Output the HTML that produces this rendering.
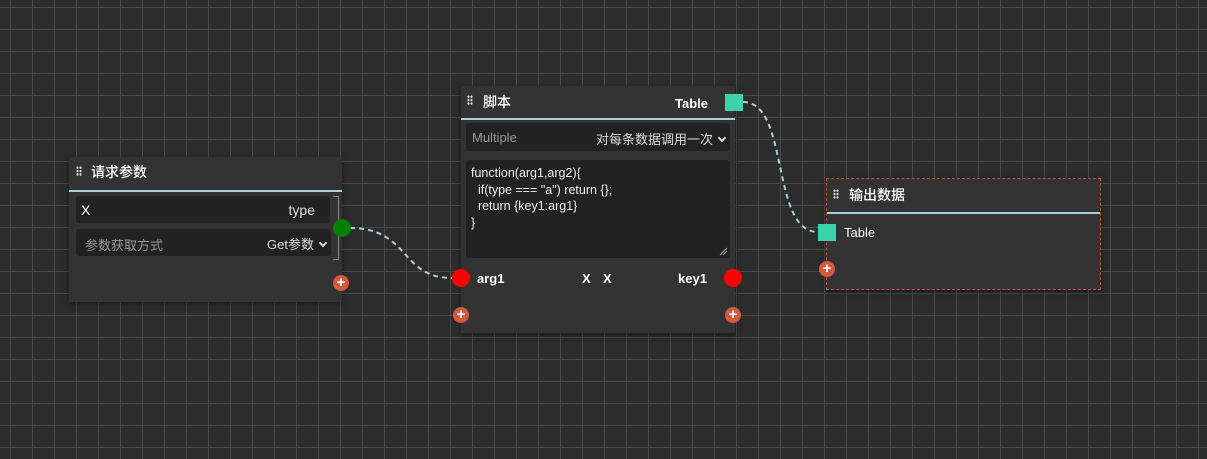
<!DOCTYPE html>
<html><head><meta charset="utf-8"><style>
*{box-sizing:border-box;margin:0;padding:0}
body{width:1207px;height:459px;overflow:hidden;background-color:#2c2c2c;
background-image:linear-gradient(#494949 1px,transparent 1px),linear-gradient(90deg,#494949 1px,transparent 1px);
background-size:22px 22px;background-position:10px 7px;position:relative;
font-family:"Liberation Sans","Noto Sans CJK SC",sans-serif;color:#fff;font-size:13px}
.node{position:absolute;background:#333;box-shadow:0 2px 6px rgba(0,0,0,.4)}
.hd{position:absolute;left:0;right:0;top:0;border-bottom:2px solid #a9d0df}
.grip{position:absolute;width:6px;height:10px;background:radial-gradient(circle,#ddd 1px,transparent 1.3px) 0 0/3px 3.4px}
.t{position:absolute;font-size:14px;font-weight:500}
.box{position:absolute;background:#222;border-radius:3px}
.abs{position:absolute;white-space:nowrap}
.dot{position:absolute;border-radius:50%}
.plus{position:absolute;width:16px;height:16px;border-radius:50%;background:#d35a3a;color:#fff;font-size:15px;line-height:15px;text-align:center;font-weight:bold}
.chev{display:inline-block;width:6px;height:6px;border-right:2px solid #ddd;border-bottom:2px solid #ddd;transform:rotate(45deg);margin-left:6px;position:relative;top:-3px}
</style></head><body>
<svg style="position:absolute;left:0;top:0" width="1207" height="459">
<path d="M350 228 C 410 228, 400 278, 452 278" stroke="#a9d0df" stroke-width="2" fill="none" stroke-dasharray="5,4"/>
<path d="M743 102 C 790 102, 770 232, 818 232" stroke="#a9d0df" stroke-width="2" fill="none" stroke-dasharray="5,4"/>
</svg>

<div class="node" style="left:69px;top:157px;width:273px;height:145px">
 <div class="hd" style="height:35px"></div>
 <div class="grip" style="left:7px;top:9px"></div>
 <div class="t" style="left:22px;top:5px">请求参数</div>
 <div class="box" style="left:7px;top:39px;width:254px;height:27px"><span class="abs" style="left:5px;top:6px;font-size:14px">X</span><span class="abs" style="right:15px;top:6px;font-size:14px;color:#ddd">type</span></div>
 <div class="box" style="left:7px;top:72px;width:255px;height:27px"><span class="abs" style="left:9px;top:6px;color:#999">参数获取方式</span><span class="abs" style="right:5px;top:5px;color:#ddd">Get参数<i class="chev"></i></span></div>
 <div style="position:absolute;left:264px;top:39px;width:6px;height:64px;border:1px solid #888;border-left:none"></div>
</div>
<div class="dot" style="left:333px;top:219px;width:18px;height:18px;background:#008000"></div>
<div class="plus" style="left:333px;top:275px">+</div>

<div class="node" style="left:461px;top:86px;width:274px;height:247px">
 <div class="hd" style="height:34px"></div>
 <div class="grip" style="left:6px;top:9px"></div>
 <div class="t" style="left:22px;top:6px">脚本</div>
 <span class="abs" style="left:214px;top:10px;font-weight:bold">Table</span>
 <div class="box" style="left:5px;top:37px;width:264px;height:28px"><span class="abs" style="left:6px;top:7px;color:#999">Multiple</span><span class="abs" style="right:5px;top:6px;color:#ddd">对每条数据调用一次<i class="chev"></i></span></div>
 <div class="box" style="left:5px;top:74px;width:264px;height:98px;padding:5px;font-size:12.5px;line-height:16.5px;color:#eee;white-space:pre">function(arg1,arg2){
  if(type === "a") return {};
  return {key1:arg1}
}</div>
 <svg class="abs" style="left:258px;top:161px" width="9" height="9"><path d="M1 8L8 1M4 8L8 4" stroke="#aaa" stroke-width="1"/></svg>
 <span class="abs" style="left:16px;top:185px;font-weight:bold">arg1</span>
 <span class="abs" style="left:121px;top:185px;font-weight:bold">X</span>
 <span class="abs" style="left:142px;top:185px;font-weight:bold">X</span>
 <span class="abs" style="left:217px;top:185px;font-weight:bold">key1</span>
</div>
<div style="position:absolute;left:725px;top:94px;width:18px;height:17px;background:#3ad4a6"></div>
<div class="dot" style="left:452px;top:269px;width:18px;height:18px;background:#f00"></div>
<div class="dot" style="left:724px;top:269px;width:18px;height:18px;background:#f00"></div>
<div class="plus" style="left:453px;top:307px">+</div>
<div class="plus" style="left:725px;top:307px">+</div>

<div class="node" style="left:826px;top:178px;width:275px;height:112px;border:1px dashed #c0503a">
 <div class="hd" style="height:35px;left:0;right:0"></div>
 <div class="grip" style="left:6px;top:10px"></div>
 <div class="t" style="left:22px;top:6px">输出数据</div>
 <span class="abs" style="left:17px;top:46px">Table</span>
</div>
<div style="position:absolute;left:818px;top:224px;width:18px;height:17px;background:#3ad4a6"></div>
<div class="plus" style="left:819px;top:261px">+</div>
</body></html>
